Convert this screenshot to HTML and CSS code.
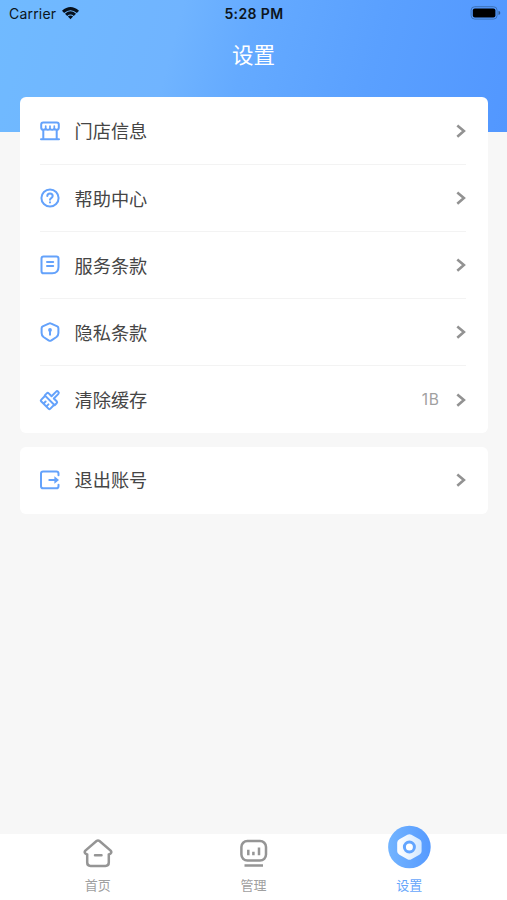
FILE: index.html
```html
<!DOCTYPE html>
<html lang="zh-CN">
<head>
<meta charset="utf-8">
<title>设置</title>
<link rel="stylesheet" href="styles.css">
</head>
<body>
<div class="app">
  <header class="header">
    <div class="status">
      <div class="carrier">
        <span>Carrier</span>
        <svg width="19" height="14" viewBox="0 0 18 14"><path d="M.5 4.7Q9-2.8 17.5 4.7L15.4 6.9Q9 1.4 2.6 6.9ZM3.5 7.7Q9 3 14.5 7.7L12.3 9.9Q9 7 5.7 9.9ZM6.4 10.6Q9 8.5 11.6 10.6L9 13.2Z"/></svg>
      </div>
      <div class="time">5:28 PM</div>
      <svg class="battery" width="30" height="14" viewBox="0 0 30 14"><rect x="1.1" y=".7" width="26" height="12.4" rx="3.6" fill="none" stroke="#3c72b8" stroke-width="1"/><rect x="2.8" y="2.4" width="22.6" height="9" rx="2" /><path d="M28.5 4.8Q30.3 5.4 30.3 6.9T28.5 9Z" fill="#32598e"/></svg>
    </div>
    <h1 class="title">设置</h1>
  </header>
  <main class="content">
    <section class="card">
      <div class="row">
        <svg class="icon" viewBox="0 0 20 20"><path d="M3.2 1.5H16.8Q18.8 1.5 18.8 3.5V6.4Q18.8 8.8 16.6 8.8 14.8 8.8 14.3 7.8 13.5 8.8 12.2 8.8T10 7.8Q9.1 8.8 7.8 8.8T5.7 7.8Q5.2 8.8 3.4 8.8 1.2 8.8 1.2 6.4V3.5Q1.2 1.5 3.2 1.5ZM3.3 8.8V18M16.7 8.8V18M1 18.2H19"/><path stroke-width="1.7" d="M5.7 5V7.8M10 5V7.8M14.3 5V7.8"/></svg>
        <span class="label">门店信息</span>
        <svg class="arrow" viewBox="0 0 10 14"><path d="M1.3 1.4 7.9 7.1 1.3 12.8"/></svg>
      </div>
      <div class="row">
        <svg class="icon" viewBox="0 0 20 20"><circle cx="10" cy="10" r="8.6"/><path d="M7.3 8.1C7.3 4.7 12.7 4.7 12.7 8.1 12.7 10.2 10 10 10 11.8M10 14.2V14.5"/></svg>
        <span class="label">帮助中心</span>
        <svg class="arrow" viewBox="0 0 10 14"><path d="M1.3 1.4 7.9 7.1 1.3 12.8"/></svg>
      </div>
      <div class="row">
        <svg class="icon" viewBox="0 0 20 20"><path d="M3.6 1.5H16.4Q18.5 1.5 18.5 3.6V12Q18.5 18.3 12.2 18.3H3.6Q1.5 18.3 1.5 16.2V3.6Q1.5 1.5 3.6 1.5ZM7 7H13.2M7 11H13.2"/></svg>
        <span class="label">服务条款</span>
        <svg class="arrow" viewBox="0 0 10 14"><path d="M1.3 1.4 7.9 7.1 1.3 12.8"/></svg>
      </div>
      <div class="row">
        <svg class="icon" viewBox="0 0 20 20"><path d="M8.8 1.6Q10 .9 11.2 1.6L17.3 4.4Q18.4 5 18.4 6.2V11Q18.4 13.5 16.5 15L11.4 18.4Q10 19.2 8.6 18.4L3.5 15Q1.6 13.5 1.6 11V6.2Q1.6 5 2.7 4.4ZM10 9V12.8"/><circle cx="10" cy="7.9" r=".9" fill="#64a2fb"/></svg>
        <span class="label">隐私条款</span>
        <svg class="arrow" viewBox="0 0 10 14"><path d="M1.3 1.4 7.9 7.1 1.3 12.8"/></svg>
      </div>
      <div class="row">
        <svg class="icon" viewBox="0 0 20 20"><g transform="rotate(45 10 10)"><path d="M8.4 6.2V-.3Q8.4-1.6 10-1.6T11.6-.3V6.2H15.6Q17 6.2 17 7.6V10.4H3V7.6Q3 6.2 4.4 6.2ZM3.6 10.4V16.2Q3.6 17.2 4.6 17.2H15.4Q16.4 17.2 16.4 16.2V10.4M8 14.2V17M12 14.2V17"/></g></svg>
        <span class="label">清除缓存</span>
        <span class="value">1B</span>
        <svg class="arrow" viewBox="0 0 10 14"><path d="M1.3 1.4 7.9 7.1 1.3 12.8"/></svg>
      </div>
    </section>
    <section class="card">
      <div class="row">
        <svg class="icon" viewBox="0 0 20 20"><path d="M18.5 5.2V3.6Q18.5 1.5 16.4 1.5H3.1Q1 1.5 1 3.6V16.2Q1 18.3 3.1 18.3H16.4Q18.5 18.3 18.5 16.2V14.8M9.3 10H17"/><path d="M14.4 6.3 19 10 14.4 13.7Z" fill="#64a2fb" stroke="none"/></svg>
        <span class="label">退出账号</span>
        <svg class="arrow" viewBox="0 0 10 14"><path d="M1.3 1.4 7.9 7.1 1.3 12.8"/></svg>
      </div>
    </section>
  </main>
  <nav class="tabs">
    <div class="tab">
      <svg width="30" height="30" viewBox="0 0 30 30"><path d="M13.5 2.1Q15 1 16.5 2.1L27.6 11.6Q29.2 13.4 27.4 14.6L25.8 15.4V23.6Q25.8 27 22.5 27H7.5Q4.2 27 4.2 23.6V15.4L2.6 14.6Q.8 13.4 2.4 11.6ZM12 16.2H18.5"/></svg>
      <span>首页</span>
    </div>
    <div class="tab">
      <svg width="30" height="30" viewBox="0 0 30 30"><rect x="2.4" y="2" width="24.6" height="19.6" rx="6"/><path stroke-linecap="butt" d="M5.5 26.6H24M9.3 10.8V16.2M14.4 12.8V16.2M20 8.5V16.2"/></svg>
      <span>管理</span>
    </div>
    <div class="tab active">
      <svg width="44" height="44" viewBox="0 0 44 44"><defs><linearGradient id="disc" x2="1"><stop stop-color="#72b4ff"/><stop offset="1" stop-color="#569aff"/></linearGradient><linearGradient id="nut" x2="1"><stop stop-color="#fff"/><stop offset="1" stop-color="#d3e8ff"/></linearGradient></defs><circle cx="22.4" cy="22" r="21.3" fill="url(#disc)"/><path d="M20.4 9.7Q22.4 8.7 24.4 9.7L32.4 14.2Q34.6 15.4 34.6 17.8V26.2Q34.6 28.6 32.4 29.8L24.4 34.3Q22.4 35.3 20.4 34.3L12.4 29.8Q10.2 28.6 10.2 26.2V17.8Q10.2 15.4 12.4 14.2Z" fill="url(#nut)"/><circle class="ring" cx="22.4" cy="22" r="5"/></svg>
      <span>设置</span>
    </div>
  </nav>
</div>
</body>
</html>
```
FILE: styles.css
```css
* { box-sizing: border-box; }
body { margin: 0; background: #f7f7f7; font-family: Inter, "Noto Sans CJK SC", sans-serif; }
svg { display: block; flex: none; overflow: visible; }
.app { height: 900px; display: flex; flex-direction: column; overflow: hidden; }
.header { height: 131.5px; flex: none; background: linear-gradient(105deg, #70baff 0%, #70b4ff 34%, #64aaff 48%, #5aa0ff 72%, #5297ff 100%); }
.status { height: 27px; display: grid; grid-template-columns: 1fr auto 1fr; align-items: center; padding: 0 7px 0 9px; color: #0c1520; }
.carrier { display: flex; align-items: center; gap: 5px; font-size: 14px; letter-spacing: .2px; }
.carrier svg { margin-top: -2px; fill: #07111d; }
.time { font-size: 14px; font-weight: 600; letter-spacing: .4px; margin-right: 1px; }
.battery { justify-self: end; margin-top: -1px; }
.title { margin: 11px 0 0; color: #fff; text-align: center; font-size: 21.5px; line-height: 34px; font-weight: 400; }
.content { position: relative; flex: 1; margin-top: -34.2px; padding: 0 19.5px 0 20px; }
.card { padding: 0 22px 0 20px; background: #fff; border-radius: 6px; }
.card + .card { margin-top: 13.4px; }
.row { height: 67.2px; display: flex; align-items: center; padding-top: 1px; border-bottom: 1px solid #f3f3f3; }
.row:last-child { border-bottom: 0; padding-top: 0; }
.icon { width: 20px; height: 20px; margin-right: 14.5px; fill: none; stroke: #64a2fb; stroke-width: 2; stroke-linecap: round; stroke-linejoin: round; }
.label { flex: 1; color: #454545; font-size: 18.2px; line-height: 28px; padding-top: 1px; }
.row:last-child .label { padding-top: 0; }
.value { margin-right: 16.5px; color: #a0a0a0; font-size: 15.5px; letter-spacing: .7px; }
.arrow { width: 10px; height: 14px; margin-right: -.5px; fill: none; stroke: #929292; stroke-width: 2.6; }
.tabs { height: 66px; flex: none; display: flex; padding: 0 20px; background: #fff; }
.tab { flex: 1; display: flex; flex-direction: column; align-items: center; justify-content: flex-end; gap: 6px; padding-bottom: 5px; color: #a0a0a0; font-size: 13px; line-height: 20px; fill: none; stroke-linecap: round; }
.tab svg { stroke: #959595; stroke-width: 2.5; }
.tab.active { color: #66a6fb; }
.tab.active svg { stroke: none; }
.ring { fill: #fff; stroke: #62a5ff; stroke-width: 3; }
```
